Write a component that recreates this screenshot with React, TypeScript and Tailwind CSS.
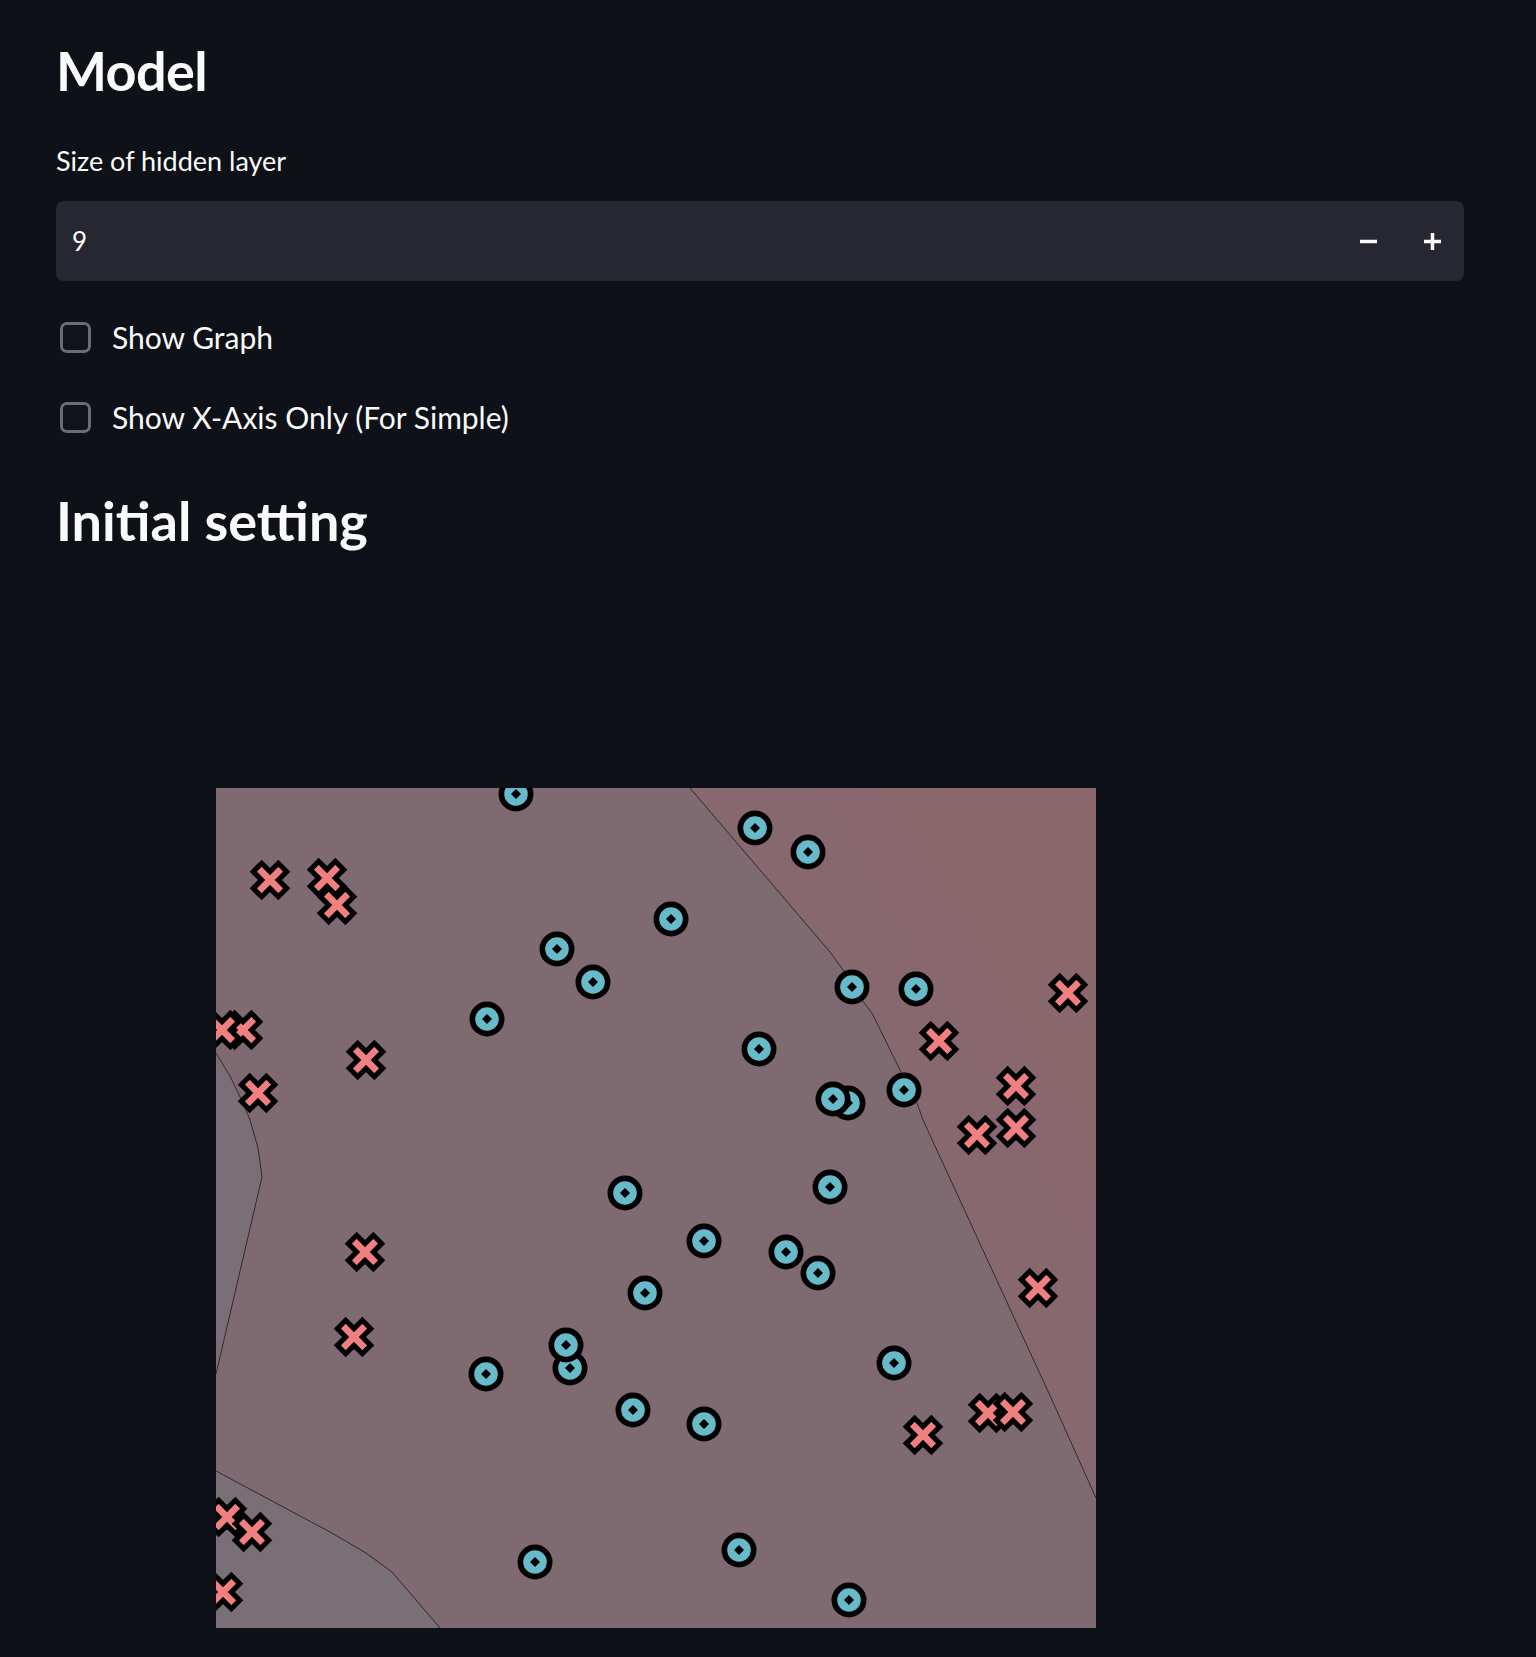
import React from 'react';

// Scatter data in plot-local pixels (plot is 880 x 840)
type Pt = [number, number];

const CIRCLES: Pt[] = [
  [300, 6], [539, 40], [592, 64], [455, 131], [341, 161], [377, 194],
  [271, 231], [636, 199], [700, 201], [543, 261], [632, 315], [617, 311],
  [688, 302], [614, 399], [409, 405], [488, 453], [570, 464], [602, 485],
  [429, 505], [354, 580], [350, 557], [270, 586], [678, 575], [417, 622],
  [488, 636], [319, 774], [523, 762], [633, 812],
];

const CROSSES: Pt[] = [
  [54, 92], [111, 90], [121, 117], [27, 242], [6, 242], [150, 272],
  [42, 305], [852, 205], [723, 253], [800, 298], [800, 340], [761, 347],
  [149, 464], [138, 549], [822, 500], [772, 625], [797, 624], [707, 647],
  [11, 729], [36, 744], [7, 804],
];

const U = 5.9;
const CROSS_POINTS = [
  [-U, -3 * U], [U, -3 * U], [U, -U], [3 * U, -U], [3 * U, U], [U, U],
  [U, 3 * U], [-U, 3 * U], [-U, U], [-3 * U, U], [-3 * U, -U], [-U, -U],
]
  .map((p) => p.join(','))
  .join(' ');

function CircleMarker({ x, y }: { x: number; y: number }) {
  return (
    <g transform={`translate(${x} ${y})`}>
      <circle r={14.65} fill="#66bac9" stroke="#000" strokeWidth={5.7} />
      <polygon points="0,-5 5,0 0,5 -5,0" fill="#000" />
    </g>
  );
}

function CrossMarker({ x, y }: { x: number; y: number }) {
  return (
    <g transform={`translate(${x} ${y}) rotate(45)`}>
      <polygon points={CROSS_POINTS} fill="#f08080" stroke="#000" strokeWidth={5.1} strokeLinejoin="miter" />
    </g>
  );
}

function DecisionPlot() {
  const rightEdge = 'M474 0 L614 164 L627 182 L636 199 L656 225 L684 282 L701 315 L707 332 L836 612 L880 710';
  const leftEdge = 'M0 265 L14 288 L27 315 L34 332 L42 360 L46 389 L0 586';
  const bottomEdge = 'M0 683 L114 744 L150 765 L176 784 L224 840';

  return (
    <svg width={880} height={840} viewBox="0 0 880 840" className="block">
      <defs>
        <linearGradient id="redSide" x1="0" y1="1" x2="1" y2="0">
          <stop offset="0" stopColor="#826a70" />
          <stop offset="0.6" stopColor="#87686e" />
          <stop offset="1" stopColor="#8b676d" />
        </linearGradient>
      </defs>
      <rect width={880} height={840} fill="#7f6a71" />
      <path d={`${rightEdge} L880 0 Z`} fill="url(#redSide)" />
      <path d={`${leftEdge} Z`} fill="#7a6f77" />
      <path d={`${bottomEdge} L0 840 Z`} fill="#7a6f77" />
      <path d={rightEdge} fill="none" stroke="#262626" strokeWidth={0.9} />
      <path d={leftEdge} fill="none" stroke="#262626" strokeWidth={0.9} />
      <path d={bottomEdge} fill="none" stroke="#262626" strokeWidth={0.9} />
      {CIRCLES.map(([x, y], i) => (
        <CircleMarker key={`c${i}`} x={x} y={y} />
      ))}
      {CROSSES.map(([x, y], i) => (
        <CrossMarker key={`x${i}`} x={x} y={y} />
      ))}
    </svg>
  );
}

function Checkbox({ label }: { label: string }) {
  return (
    <label className="flex h-[44px] items-center">
      <span className="ml-[4px] h-[31px] w-[31px] rounded-[7px] border-[3px] border-[#6b6d74] bg-[#10131a]" />
      <span className="ml-[21px] text-[30px] leading-[44px]">{label}</span>
    </label>
  );
}

export default function App() {
  return (
    <div className="min-h-[1657px] bg-[#0e1117] font-['Lato',sans-serif] text-[#fafafa]">
      <div className="pl-[56px] pr-[72px] pt-[39px] pb-[29px]">
        {/* Model */}
        <h2 className="text-[54px] font-bold leading-[64px] tracking-[-0.6px]">Model</h2>

        <div className="mt-[40px] text-[27px] leading-[36px]">Size of hidden layer</div>

        {/* Number input */}
        <div className="mt-[22px] flex h-[80px] items-center rounded-[8px] bg-[#262730]">
          <span className="flex-1 pl-[16px] text-[26px]">9</span>
          <button className="flex h-full w-[64px] items-center justify-center">
            <svg width="17" height="17" viewBox="0 0 17 17">
              <rect x="0" y="6.75" width="17" height="3.5" fill="#fafafa" />
            </svg>
          </button>
          <button className="flex h-full w-[64px] items-center justify-center">
            <svg width="17" height="17" viewBox="0 0 17 17">
              <rect x="0" y="6.75" width="17" height="3.5" fill="#fafafa" />
              <rect x="6.75" y="0" width="3.5" height="17" fill="#fafafa" />
            </svg>
          </button>
        </div>

        {/* Checkboxes */}
        <div className="mt-[34px]">
          <Checkbox label="Show Graph" />
        </div>
        <div className="mt-[36px]">
          <Checkbox label="Show X-Axis Only (For Simple)" />
        </div>

        {/* Initial setting */}
        <h2 className="mt-[50px] text-[54px] font-bold leading-[64px]">Initial setting</h2>

        <div className="ml-[160px] mt-[235px]">
          <DecisionPlot />
        </div>
      </div>
    </div>
  );
}
